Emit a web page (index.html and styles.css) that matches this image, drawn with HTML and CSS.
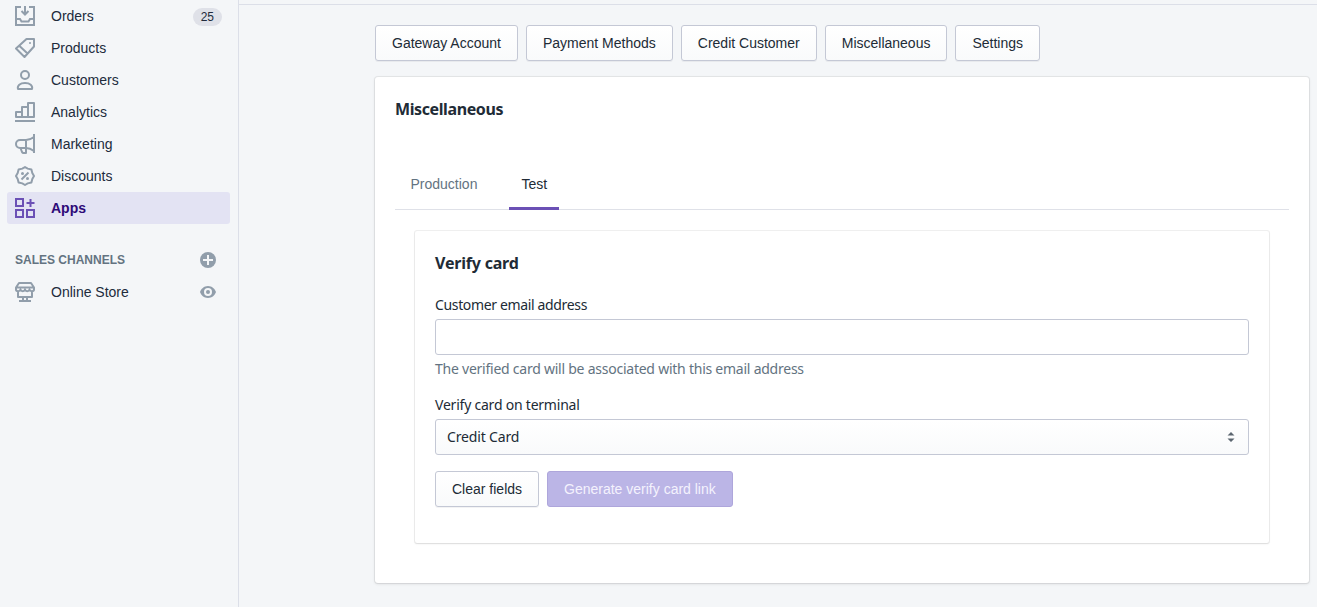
FILE: index.html
```html
<!DOCTYPE html>
<html lang="en">
<head>
<meta charset="utf-8">
<title>Miscellaneous</title>
<link rel="stylesheet" href="styles.css">
</head>
<body>
<div class="app">
  <nav class="sidebar">
    <ul class="nav">
      <li class="nav-item">
        <svg class="icon" viewBox="0 0 20 20"><path d="M6 1H1v18h18V1h-5M10 0v8M6.500 5l3.500 3.500L13.500 5M1 13h4l1.500 2.500h7L15 13h4"/></svg>
        <span>Orders</span><span class="badge">25</span>
      </li>
      <li class="nav-item">
        <svg class="icon" viewBox="0 0 20 20"><path stroke-linejoin="round" d="M11.500 1H19v7.500L9.500 19 1 10.500zM4 7.500l8.500 8"/><circle class="solid" cx="15" cy="5" r="1"/></svg>
        <span>Products</span>
      </li>
      <li class="nav-item">
        <svg class="icon" viewBox="0 0 20 20"><circle cx="10" cy="5" r="4"/><path stroke-linejoin="round" d="M3 19c-1-3.500 2-6 7-6s8 2.500 7 6z"/></svg>
        <span>Customers</span>
      </li>
      <li class="nav-item">
        <svg class="icon" viewBox="0 0 20 20"><path stroke-linejoin="round" d="M0 19h20M1 15v-5h6v5zM7 15V5h6v10zM13 15V1h6v14z"/></svg>
        <span>Analytics</span>
      </li>
      <li class="nav-item">
        <svg class="icon" viewBox="0 0 20 20"><path stroke-linejoin="round" d="M19 0v19M19 3q-4 3-8 3H5a4 4 0 0 0 0 8h6q4 0 8 3M11 6v8M5.500 14l1.500 4q.500 1 1.500 1H11v-5"/></svg>
        <span>Marketing</span>
      </li>
      <li class="nav-item">
        <svg class="icon" viewBox="0 0 20 20"><path stroke-linejoin="round" d="M10 1l2.700 1.600 3.700.9.900 3.600L19 10l-1.700 2.900-.9 3.600-3.700.9L10 19l-2.700-1.600-3.700-.9-.9-3.600L1 10l1.700-2.900.9-3.600 3.700-.9z"/><path d="M13.500 6.500l-7 7"/><circle class="solid" cx="7.500" cy="7.500" r="1.500"/><circle class="solid" cx="12.500" cy="12.500" r="1.500"/></svg>
        <span>Discounts</span>
      </li>
      <li class="nav-item active">
        <svg class="icon" viewBox="0 0 20 20"><path d="M1 1h7v7H1zM1 12h7v7H1zM12 12h7v7h-7zM15.500 1v8M11.500 5h8"/></svg>
        <span>Apps</span>
      </li>
    </ul>
    <div class="section">
      <span>SALES CHANNELS</span>
      <svg class="mini" viewBox="0 0 16 16"><circle class="solid" cx="8" cy="8" r="8"/><path class="plus" d="M8 3v10M3 8h10"/></svg>
    </div>
    <div class="nav-item">
      <svg class="icon" viewBox="0 0 20 20"><path stroke-linejoin="round" d="M4 1h12l3 4.500v2c0 2.200-4 2.200-4.500 0-.5 2.200-4 2.200-4.500 0-.5 2.200-4 2.200-4.500 0C5 9.700 1 9.700 1 7.500v-2zM1 5.500h18M3 9v6h14V9M8 15v4M12 15v4M4 19h12"/></svg>
      <span>Online Store</span>
      <svg class="mini eye" viewBox="0 0 16 16"><path class="solid" fill-rule="evenodd" d="M8 2c4 0 7 3 8 6-1 3-4 6-8 6s-7-3-8-6c1-3 4-6 8-6zm0 2a4 4 0 1 0 0 8 4 4 0 0 0 0-8z"/><circle class="solid" cx="8" cy="8" r="2"/></svg>
    </div>
  </nav>
  <main class="main">
    <div class="actions">
      <button class="btn">Gateway Account</button>
      <button class="btn">Payment Methods</button>
      <button class="btn">Credit Customer</button>
      <button class="btn">Miscellaneous</button>
      <button class="btn">Settings</button>
    </div>
    <section class="card">
      <h2 class="title">Miscellaneous</h2>
      <div class="tabs">
        <div class="tab">Production</div>
        <div class="tab selected">Test</div>
      </div>
      <section class="panel">
        <h2 class="title verify">Verify card</h2>
        <label class="label email-label" for="email">Customer email address</label>
        <input class="field" id="email" type="text">
        <p class="help">The verified card will be associated with this email address</p>
        <div class="label terminal-label">Verify card on terminal</div>
        <div class="field select">
          <span>Credit Card</span>
          <svg class="arrows" viewBox="0 0 8 12"><path d="M4 1l3.500 3.500h-7zM4 11l3.500-3.500h-7z"/></svg>
        </div>
        <div class="buttons">
          <button class="btn">Clear fields</button>
          <button class="btn primary" disabled>Generate verify card link</button>
        </div>
      </section>
    </section>
  </main>
</div>
</body>
</html>
```
FILE: styles.css
```css
* { box-sizing: border-box; }
body {
  margin: 0;
  color: #212b36;
  background: #f4f6f8;
  font: 14px/20px "Liberation Sans", Arial, sans-serif;
}
.app { display: flex; height: 607px; overflow: hidden; }
.sidebar { width: 239px; padding: 0 8px 0 7px; border-right: 1px solid #dcdfe8; flex: none; }
.nav { list-style: none; margin: 0; padding: 0; }
.nav-item { display: flex; align-items: center; height: 32px; padding: 0 8px; border-radius: 3px; color: #212b3c; }
.icon { width: 20px; height: 20px; margin-right: 16px; flex: none; fill: none; stroke: #919eab; stroke-width: 2; }
.icon .solid { fill: #919eab; stroke: none; }
.nav-item.active { background: #e3e3f3; color: #2e0a78; font-weight: bold; }
.active .icon { stroke: #6b50b5; }
.badge {
  margin-left: auto; padding: 0 8px; height: 18px; line-height: 18px; margin-top: 1px;
  border-radius: 9px; background: #dfe1e8; font-size: 12px;
}
.section {
  display: flex; align-items: center; justify-content: space-between;
  height: 32px; margin-top: 20px; padding: 0 14px 0 8px;
  font-size: 12px; font-weight: bold; color: #637381;
}
.mini { width: 16px; height: 16px; fill: #919eab; }
.plus { stroke: #f4f6f8; stroke-width: 2; }
.eye { margin-left: auto; margin-right: 6px; }
.main { flex: 1; margin-top: 4px; padding: 20px 8px 0 136px; border-top: 1px solid #dcdfe8; }
.actions { display: flex; gap: 8px; }
.btn {
  height: 36px; padding: 0 16px; color: #212b36;
  font: 14px/20px "Liberation Sans", Arial, sans-serif;
  border: 1px solid #c4c8d5; border-radius: 3px;
  background: linear-gradient(#fff, #f9fafb);
  box-shadow: 0 1px 0 rgba(22, 29, 37, .05);
  white-space: nowrap;
}
.card {
  height: 506px; margin: 16px 0 0; padding: 20px; background: #fff; border-radius: 3px;
  box-shadow: 0 0 0 1px rgba(63, 63, 68, .08), 0 1px 3px rgba(63, 63, 68, .15);
}
.title { margin: 0; font: bold 16px/24px "Noto Sans", sans-serif; letter-spacing: -.4px; }
.verify { letter-spacing: -.2px; }
.tabs { display: flex; height: 57px; margin-top: 32px; border-bottom: 1px solid #dfe1e8; }
.tab { width: 100px; padding: 21px 15.500px 0; color: #637381; }
.selected { width: 50px; margin-left: 14px; padding: 21px 0 0 12.500px; color: #212b36; border-bottom: 3px solid #6b50b5; margin-bottom: -1px; }
.panel {
  height: 312px; margin: 21px 20px 0; padding: 20px; border-radius: 2px;
  box-shadow: 0 0 0 1px rgba(63, 63, 68, .08), 0 1px 2px rgba(63, 63, 68, .12);
}
.label { display: block; font: 14px/20px "Noto Sans", sans-serif; letter-spacing: -.35px; }
.email-label { margin-top: 20px; }
.terminal-label { letter-spacing: -.22px; }
.field {
  display: block; width: 100%; height: 36px; margin-top: 4px; padding: 0 11px;
  border: 1px solid #c4c8d5; border-radius: 3px; background: #fff;
}
.help { width: max-content; margin: 4px 0 16px; color: #637381; font: 14px/20px "Noto Sans", sans-serif; letter-spacing: -.24px; }
.select {
  display: flex; align-items: center; justify-content: space-between;
  font: 14px/20px "Noto Sans", sans-serif; letter-spacing: -.15px; background: linear-gradient(#fff, #f9fafb);
}
.arrows { width: 8px; height: 12px; margin-right: 2px; fill: #5c6670; }
.buttons { display: flex; gap: 8px; margin-top: 16px; }
.primary { color: #f4f2fd; background: #bbb5e6; border-color: #aea6db; box-shadow: none; }
```
